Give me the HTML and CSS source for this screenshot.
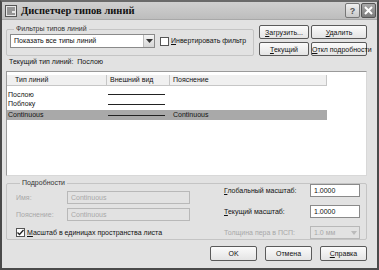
FILE: index.html
```
<!doctype html>
<html lang="ru">
  <head>
    <meta charset="UTF-8" />
    <title>Диспетчер типов линий</title>
    <link rel="stylesheet" href="styles.css">
  </head>
  <body>
    <div class="window">
      <div class="titlebar">
        <svg class="app-icon" width="12" height="12" viewBox="0 0 12 12">
          <rect x="0.5" y="0.5" width="11" height="11" fill="#e8e8e8" stroke="#555" />
          <path d="M2 3h8M2 5h8M2 7h5M2 9h8" stroke="#444" stroke-width="1" />
        </svg>
        <span class="title">Диспетчер типов линий</span>
        <div class="caption-btns">
          <span class="cap-btn">?</span>
          <span class="cap-btn close">
            <svg width="9" height="9" viewBox="0 0 9 9">
              <path d="M1 1L8 8M8 1L1 8" stroke="#fff" stroke-width="2" />
            </svg>
          </span>
        </div>
      </div>

      <div class="content">
        <div class="top">
          <fieldset class="group filters">
            <legend>Фильтры типов линий</legend>
            <div class="filter-row">
              <div class="combo">
                <span class="combo-text">Показать все типы линий</span>
                <span class="combo-arrow">
                  <svg width="7" height="4" viewBox="0 0 7 4"><path d="M0 0h7L3.5 4z" fill="#333" /></svg>
                </span>
              </div>
              <label class="check"><span class="box"></span><span><u>И</u>нвертировать фильтр</span></label>
            </div>
          </fieldset>
          <div class="btn-grid">
            <button class="btn"><u>З</u>агрузить...</button>
            <button class="btn"><u>У</u>далить</button>
            <button class="btn"><u>Т</u>екущий</button>
            <button class="btn"><u>О</u>ткл подробности</button>
          </div>
        </div>

        <div class="current">Текущий тип линий:&nbsp; Послою</div>

        <div class="list">
          <div class="list-head">
            <span class="col col-name">Тип линий</span>
            <span class="col col-look">Внешний вид</span>
            <span class="col col-desc">Пояснение</span>
          </div>
          <div class="row">
            <span class="col col-name">Послою</span>
            <span class="col col-look"><span class="stroke"></span></span>
            <span class="col col-desc"></span>
          </div>
          <div class="row">
            <span class="col col-name">Поблоку</span>
            <span class="col col-look"><span class="stroke"></span></span>
            <span class="col col-desc"></span>
          </div>
          <div class="row selected">
            <span class="col col-name">Continuous</span>
            <span class="col col-look"><span class="stroke"></span></span>
            <span class="col col-desc">Continuous</span>
          </div>
        </div>

        <fieldset class="group details">
          <legend>Подробности</legend>
          <div class="details-grid">
            <div class="details-left">
              <div class="field disabled">
                <span class="field-label">Имя:</span>
                <span class="input wide">Continuous</span>
              </div>
              <div class="field disabled">
                <span class="field-label">Пояснение:</span>
                <span class="input wide">Continuous</span>
              </div>
              <label class="check scale-check"><span class="box checked">
                <svg width="7" height="7" viewBox="0 0 7 7"><path d="M0.5 3.5L2.5 5.5L6.5 1" stroke="#222" stroke-width="1.3" fill="none" /></svg>
              </span><span><u>М</u>асштаб в единицах пространства листа</span></label>
            </div>
            <div class="details-right">
              <div class="field">
                <span class="field-label"><u>Г</u>лобальный масштаб:</span>
                <span class="input short">1.0000</span>
              </div>
              <div class="field">
                <span class="field-label"><u>Т</u>екущий масштаб:</span>
                <span class="input short">1.0000</span>
              </div>
              <div class="field disabled">
                <span class="field-label">Толщина пера в ПСП:</span>
                <span class="input short combo-small">1.0 мм<span class="combo-arrow small">
                  <svg width="6" height="4" viewBox="0 0 6 4"><path d="M0 0h6L3 4z" fill="#bbb" /></svg>
                </span></span>
              </div>
            </div>
          </div>
        </fieldset>

        <div class="footer">
          <button class="btn">OK</button>
          <button class="btn">Отмена</button>
          <button class="btn"><u>С</u>правка</button>
        </div>
      </div>
    </div>
  </body>
</html>
```

FILE: styles.css
```
:root {
  --frame: #4a4a4a;
  --dialog-bg: #e2e2e2;
  --border: #8c8c8c;
  --light-border: #c4c4c4;
  --text: #111;
  --disabled: #a8a8a8;
  --selected: #a9a9a9;
}

* {
  box-sizing: border-box;
  margin: 0;
  padding: 0;
}

body {
  width: 379px;
  height: 270px;
  font-family: "Liberation Sans", Arial, sans-serif;
  font-size: 7px;
  line-height: 8px;
  color: var(--text);
  background: #fff;
}

.window {
  width: 379px;
  height: 270px;
  display: flex;
  flex-direction: column;
  border: 2px solid var(--frame);
  border-top-color: #6a6a6a;
  background: var(--dialog-bg);
}

.titlebar {
  height: 18px;
  flex: none;
  display: flex;
  align-items: center;
  padding: 0 1px 0 3px;
  background: linear-gradient(#d0d0d0, #bdbdbd);
  border-bottom: 1px solid #a8a8a8;
}

.app-icon {
  margin-right: 4px;
}

.title {
  flex: 1;
  font-family: "Liberation Serif", serif;
  font-weight: bold;
  font-size: 10.5px;
  line-height: 12px;
}

.caption-btns {
  display: flex;
  gap: 1px;
}

.cap-btn {
  width: 15px;
  height: 15px;
  display: flex;
  align-items: center;
  justify-content: center;
  border: 1px solid #777;
  border-radius: 2px;
  background: linear-gradient(#f0f0f0, #c8c8c8);
  font-weight: bold;
  font-size: 9px;
  color: #555;
}

.cap-btn.close {
  background: linear-gradient(#a8a8a8, #7c7c7c);
  border-color: #555;
}

.content {
  flex: 1;
  display: flex;
  flex-direction: column;
  padding: 5px 10px 0 4px;
}

/* group frames */
.group {
  border: 1px solid var(--light-border);
  border-radius: 2px;
  padding: 0 3px 2px 3px;
}

.group legend {
  padding: 0 2px;
  margin-left: 4px;
  color: #333;
}

.top {
  display: flex;
  gap: 5px;
}

.filters {
  width: 248px;
  padding-top: 1px;
}

.filter-row {
  display: flex;
  align-items: center;
  gap: 5px;
}

.combo {
  width: 145px;
  height: 14px;
  display: flex;
  align-items: center;
  justify-content: space-between;
  background: #fff;
  border: 1px solid #8a8a8a;
  padding-left: 3px;
}

.combo-arrow {
  width: 11px;
  height: 12px;
  display: flex;
  align-items: center;
  justify-content: center;
  background: linear-gradient(#f4f4f4, #d6d6d6);
  border-left: 1px solid #bbb;
}

.check {
  display: flex;
  align-items: center;
  gap: 2px;
  white-space: nowrap;
}

.box {
  width: 9px;
  height: 9px;
  display: flex;
  align-items: center;
  justify-content: center;
  background: #fff;
  border: 1px solid #555;
}

.btn-grid {
  display: grid;
  grid-template-columns: 50px 56px;
  gap: 3px 2px;
  margin-top: 0;
  align-content: start;
}

.btn {
  height: 14px;
  font-family: inherit;
  font-size: 7px;
  color: var(--text);
  background: linear-gradient(#fbfbfb, #e4e4e4);
  border: 1px solid #5a5a5a;
  border-radius: 2px;
  white-space: nowrap;
}

.current {
  margin: 2px 0 5px 3px;
  height: 8px;
}

.list {
  height: 105px;
  background: #fff;
  border: 1px solid #9a9a9a;
  border-right-color: #d8d8d8;
  border-bottom-color: #d8d8d8;
  padding-top: 3px;
}

.list-head,
.row {
  display: flex;
  width: 320px;
}

.list-head {
  height: 11px;
  align-items: center;
  background: #f0f0f0;
  border-bottom: 1px solid #c6c6c6;
  margin-bottom: 4px;
}

.list-head .col {
  border-right: 1px solid #c6c6c6;
  height: 100%;
  display: flex;
  align-items: center;
}

.list-head .col-name {
  padding-left: 8px;
}

.col {
  padding-left: 3px;
}

.col-name {
  width: 100px;
  padding-left: 1px;
}

.col-look {
  width: 63px;
  display: flex;
  align-items: center;
}

.row .col-look {
  padding-left: 1px;
}

.col-desc {
  flex: 1;
}

.row {
  height: 9.5px;
  align-items: center;
}

.stroke {
  display: block;
  width: 57px;
  height: 1px;
  background: #222;
}

.row.selected {
  background: var(--selected);
  margin-top: 1px;
  height: 10px;
}

.details {
  margin-top: 3px;
  height: 61px;
  padding: 0 6px 0 9px;
}

.details-grid {
  display: flex;
  justify-content: space-between;
}

.details-left {
  display: flex;
  flex-direction: column;
  gap: 4px;
  padding-top: 4px;
}

.details-right {
  display: flex;
  flex-direction: column;
  gap: 8px;
  width: 136px;
  margin-top: -3px;
}

.field {
  display: flex;
  align-items: center;
  justify-content: space-between;
}

.details-left .field-label {
  width: 51px;
}

.input {
  height: 13px;
  display: flex;
  align-items: center;
  padding-left: 3px;
  background: #fff;
  border: 1px solid #8a8a8a;
}

.input.wide {
  width: 123px;
}

.input.short {
  width: 50px;
}

.field.disabled {
  color: var(--disabled);
}

.field.disabled .input {
  background: var(--dialog-bg);
  border-color: #b8b8b8;
}

.combo-small {
  justify-content: space-between;
  padding-right: 0;
}

.combo-arrow.small {
  height: 11px;
  background: none;
  border-left: none;
}

.scale-check {
  margin-top: 3px;
}

.footer {
  display: flex;
  justify-content: flex-end;
  gap: 8px;
  padding-top: 6px;
}

.footer .btn {
  width: 47px;
  height: 15px;
}
```
